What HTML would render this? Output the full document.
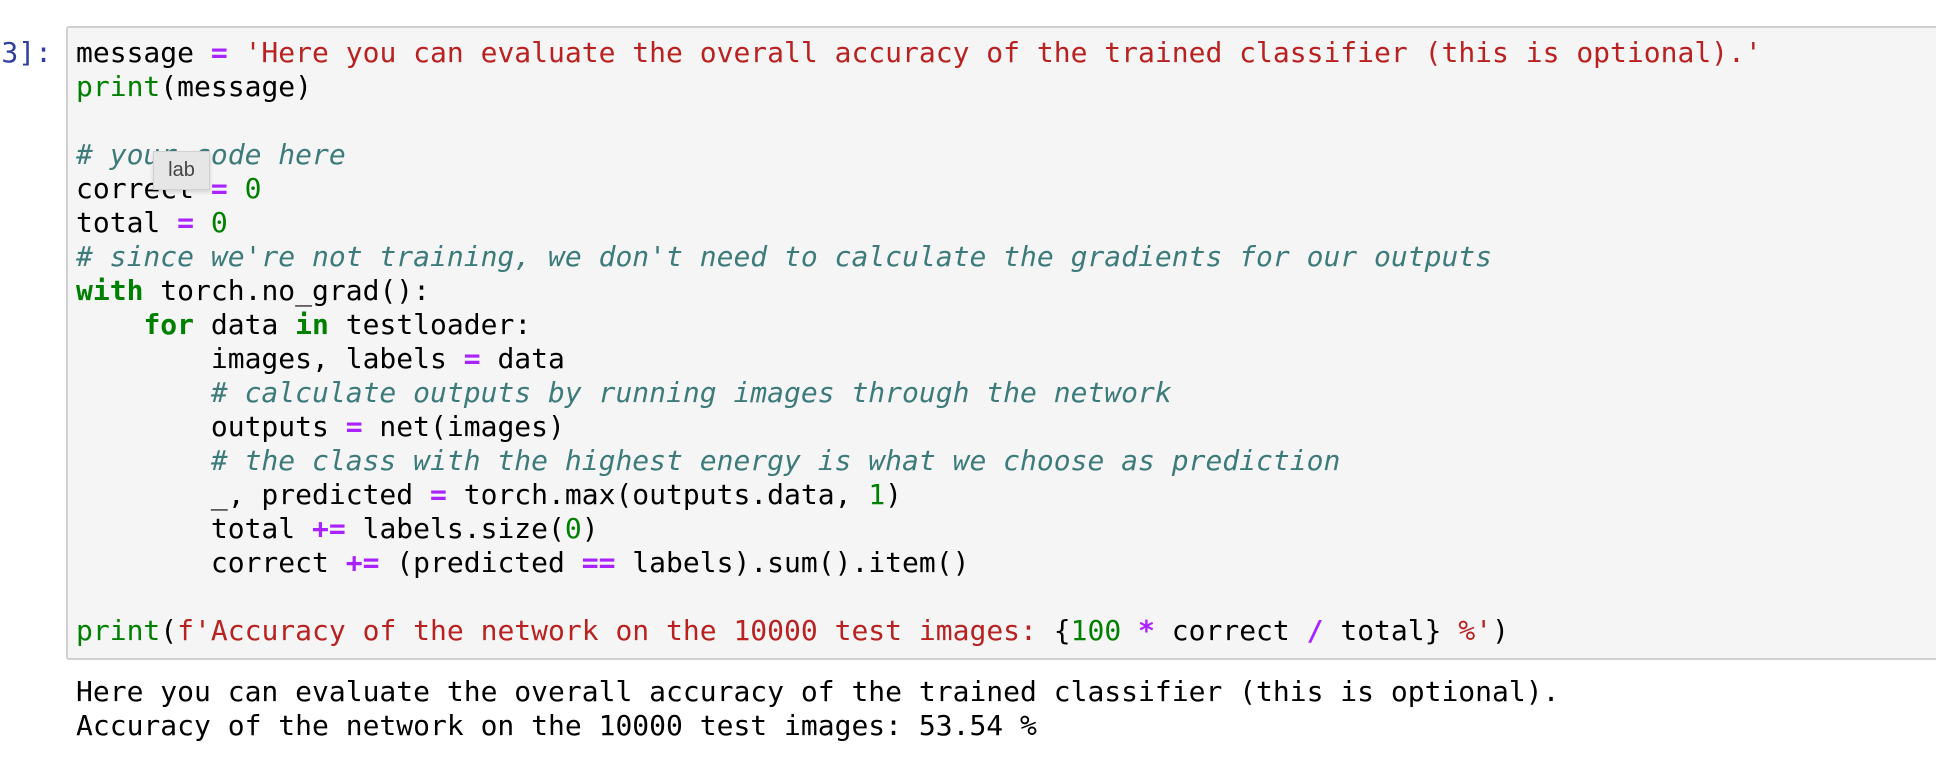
<!DOCTYPE html>
<html><head><meta charset="utf-8"><style>
html,body{margin:0;padding:0;background:#fff;width:1936px;height:760px;overflow:hidden;position:relative}
.mono{font-family:"DejaVu Sans Mono","Liberation Mono",monospace;font-size:28px;line-height:34px;white-space:pre}
#prompt{position:absolute;right:1884px;top:36px;color:#303f9f;text-align:right}
#cell{position:absolute;left:66px;top:26px;width:1900px;height:634px;background:#f5f5f5;border:2px solid #d0d0d0;border-radius:3px;box-sizing:border-box}
#code{position:absolute;left:8px;top:8px;color:#000}
#out{position:absolute;left:76px;top:675px;color:#000}
.k{color:#008000;font-weight:bold}
.b{color:#008000}
.s{color:#ba2121}
.c{color:#3d7b7b;font-style:italic}
.n{color:#008000}
.o{color:#aa22ff;font-weight:bold}
#tip{position:absolute;left:153px;top:151px;width:57px;height:39px;background:#e6e6e6;border:1px solid #d0d0d0;box-shadow:0 2px 4px rgba(0,0,0,.15);font-family:"Liberation Sans",sans-serif;font-size:20px;color:#444;text-align:center;line-height:37px;box-sizing:border-box}
</style></head><body>
<div id="prompt" class="mono">[13]:</div>
<div id="cell"><div id="code" class="mono">message <span class="o">=</span> <span class="s">'Here you can evaluate the overall accuracy of the trained classifier (this is optional).'</span>
<span class="b">print</span>(message)

<span class="c"># your code here</span>
correct <span class="o">=</span> <span class="n">0</span>
total <span class="o">=</span> <span class="n">0</span>
<span class="c"># since we're not training, we don't need to calculate the gradients for our outputs</span>
<span class="k">with</span> torch.no_grad():
    <span class="k">for</span> data <span class="k">in</span> testloader:
        images, labels <span class="o">=</span> data
        <span class="c"># calculate outputs by running images through the network</span>
        outputs <span class="o">=</span> net(images)
        <span class="c"># the class with the highest energy is what we choose as prediction</span>
        _, predicted <span class="o">=</span> torch.max(outputs.data, <span class="n">1</span>)
        total <span class="o">+=</span> labels.size(<span class="n">0</span>)
        correct <span class="o">+=</span> (predicted <span class="o">==</span> labels).sum().item()

<span class="b">print</span>(<span class="s">f'Accuracy of the network on the 10000 test images: </span>{<span class="n">100</span> <span class="o">*</span> correct <span class="o">/</span> total}<span class="s"> %'</span>)</div></div>
<div id="tip">lab</div>
<div id="out" class="mono">Here you can evaluate the overall accuracy of the trained classifier (this is optional).
Accuracy of the network on the 10000 test images: 53.54 %</div>
</body></html>
